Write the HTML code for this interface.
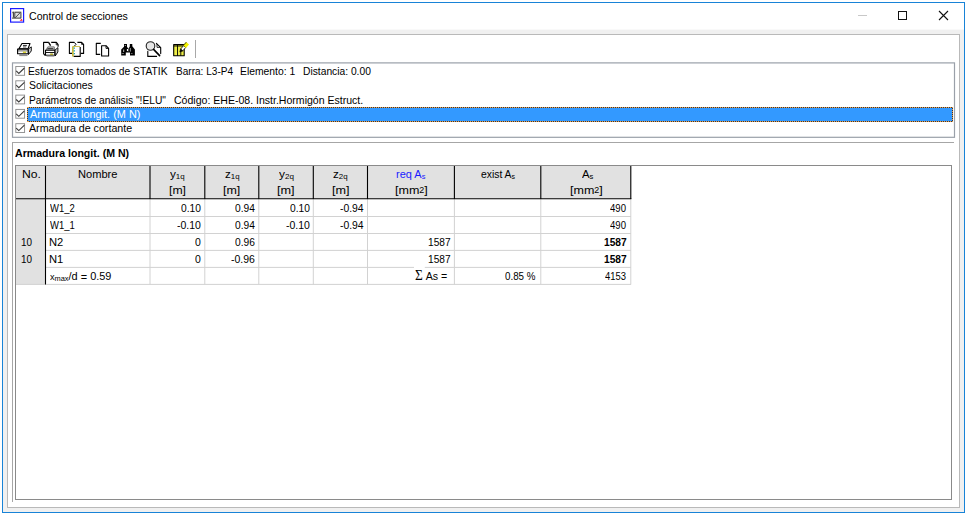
<!DOCTYPE html>
<html lang="es">
<head>
<meta charset="utf-8">
<title>Control de secciones</title>
<style>
html,body{margin:0;padding:0;background:#fff;}
body{width:966px;height:514px;position:relative;overflow:hidden;font-family:"Liberation Sans",sans-serif;font-size:11.5px;color:#000;}
.abs{position:absolute;}
#win{left:2px;top:2px;width:961px;height:509px;border:1px solid #1883d7;background:#f0f0f0;}
#titlebar{left:3px;top:3px;width:961px;height:26px;background:#fff;border-bottom:1px solid #f9f9f9;}
#outer{left:7px;top:34px;width:951px;height:472px;border:1px solid #b9b9b9;background:#fff;}
#sel{left:27px;top:107px;width:924px;height:13px;background:#3399ff;border:1px solid #27364f;}
#sel2{left:27px;top:107px;width:924px;height:13px;border:1px dotted #f0a040;}
#p2top{left:12px;top:142px;width:942px;height:1px;background:#a6a6a6;}
#p2left{left:12px;top:142px;width:1px;height:360px;background:#a6a6a6;}
#tpanel{left:15px;top:165px;width:935px;height:333px;border:1px solid #8a8a8a;background:#fff;}
#grid{left:0;top:0;}
#icons{left:0;top:0;}
.tx{position:absolute;transform-origin:0 0;white-space:nowrap;line-height:14px;height:14px;}
.sub{font-size:7.8px;position:relative;top:1.6px;}
.sm{font-size:9.6px;}
.dn{position:relative;top:1px;}
.sup{font-size:8.2px;position:relative;top:-1px;}
.sig{font-family:"Liberation Serif","DejaVu Serif",serif;font-size:14.5px;line-height:10px;}
</style>
</head>
<body>
<div id="win" class="abs"></div>
<div id="titlebar" class="abs"></div>
<div id="outer" class="abs"></div>
<svg class="abs" style="left:0;top:0" width="966" height="140" viewBox="0 0 966 140"><rect x="12.5" y="62.9" width="942" height="74.4" fill="#fff" stroke="#9aa0a9" stroke-width="1.2"/></svg>
<div id="sel" class="abs"></div>
<div id="sel2" class="abs"></div>
<div id="p2top" class="abs"></div>
<div id="p2left" class="abs"></div>
<div id="tpanel" class="abs"></div>
<svg id="grid" class="abs" width="966" height="514" viewBox="0 0 966 514">
<rect x="16" y="166" width="615" height="32.5" fill="#e1e1e1"/>
<rect x="16" y="198" width="29.5" height="86.5" fill="#e1e1e1"/>
<g stroke="#d2d2d2" stroke-width="1">
<path d="M150 199V284.5M204.8 199V284.5M258.8 199V284.5M313.3 199V284.5M367.5 199V284.5M454.4 199V284.5M540.8 199V284.5M630.8 199V284.5"/>
<path d="M46 216.5H631M46 233.5H631M46 250.4H631M46 267.4H631M16 284.4H631"/>
</g>
<rect x="414" y="266" width="10.8" height="3" fill="#fff"/>
<g stroke="#000" stroke-width="1.1">
<path d="M45.5 166V284.5M150 166V199M204.8 166V199M258.8 166V199M313.3 166V199M367.5 166V199M454.4 166V199M540.8 166V199M630.8 166V199"/>
<path d="M16 198.7H631.3"/>
</g>
</svg>
<svg id="icons" class="abs" width="966" height="140" viewBox="0 0 966 140">
<!-- window icon -->
<rect x="10.6" y="8.6" width="13" height="13.5" fill="#fff" stroke="#1c1cff" stroke-width="1.2"/>
<rect x="11.9" y="11" width="9.8" height="8" fill="#dedede"/>
<g fill="none" stroke="#222" stroke-width="0.8">
<path d="M14.8 12.3H20.9V18.1H12.1M14.8 12.3V18M15.4 17.6L19.8 13"/>
<path d="M12.3 12.8L13.5 12.1V17.6"/>
</g>
<path d="M19.6 20.8L22.8 20.8L21.6 18.7Z" fill="#ff1818"/>
<!-- min / max / close -->
<path d="M858 15.5H867" stroke="#c8c8c8" stroke-width="1"/>
<rect x="898.5" y="11.5" width="8" height="8" fill="none" stroke="#111" stroke-width="1"/>
<path d="M939 11L948 20M948 11L939 20" stroke="#111" stroke-width="1.1" fill="none"/>
<!-- toolbar separator -->
<path d="M195.5 40V58" stroke="#a8a8a8" stroke-width="1"/>
<!-- icon 1: printer -->
<g id="prn" stroke="#000" stroke-width="1.1" fill="#fff" stroke-linejoin="round">
<path d="M22 43.5H30L28 48.8H18.9Z"/>
<path d="M23 45.5H26.3V47.8H23Z" fill="#9a9a9a" stroke="none"/>
<path d="M23 45.4H26.9" stroke-width="0.8"/>
<path d="M28.2 49.1L31.3 46.9V50.9L28.5 54.5Z" fill="#cfcfcf" stroke-width="0.9"/>
<path d="M17.6 49.1H28.2V53.8H17.6Z"/>
<path d="M17.6 50.9H28.2" stroke-width="0.6"/>
<rect x="22.9" y="51.6" width="3.2" height="1.3" fill="#d2ca18" stroke="none"/>
<path d="M19.2 54.8H27.6" stroke="#808080" stroke-width="1.2"/>
<path d="M19.4 55.6H27.4" stroke="#444" stroke-width="0.5"/>
</g>
<!-- icon 2: page + printer -->
<g stroke="#000" stroke-width="1.1" fill="none" stroke-linejoin="round">
<path d="M48.8 42.4H43.6V53.6L45 55.4"/>
<path d="M51.2 42.4H56.4L58.1 44.6V46.8"/>
<path d="M48.6 42.4L50.6 45.6" stroke-width="1.3"/>
<path d="M56.2 42.6V44.8H58" stroke-width="0.8"/>
<path d="M47.8 46.8H54.2L55 49.9H46Z" fill="#cdcdcd" stroke="#555" stroke-width="0.7"/>
<path d="M47.4 48.4H53.4" stroke="#222" stroke-width="0.9"/>
<path d="M54.8 50.3L57.9 47.6V52L55.2 56Z" fill="#c8c8c8" stroke-width="0.9"/>
<path d="M45.5 50.3H54.8V55.3H45.5Z" fill="#fff"/>
<path d="M45.5 52.5H54.8" stroke-width="0.9"/>
<rect x="50.2" y="53.5" width="2.7" height="1.4" fill="#a8a010" stroke="none"/>
<path d="M46.6 56H54.4" stroke="#8a8a8a" stroke-width="1.2"/>
</g>
<!-- icon 3: pages + notebook -->
<g stroke="#000" stroke-width="1.1" fill="none" stroke-linejoin="round">
<path d="M74.4 42.4H69.4V53.4H72.4"/>
<path d="M74.4 42.4L76 44.4L74 46.4" stroke-width="1"/>
<path d="M77.4 42.4H81.6L83.6 44.4V53.4H80.6"/>
<path d="M81.6 42.4V44.4H83.6" stroke-width="0.8"/>
<rect x="72.4" y="46.4" width="7.8" height="10" fill="#fff" stroke="none"/>
<path d="M72.6 46.5H80" stroke="#c4b42c" stroke-width="0.8"/>
<path d="M80.2 47V56.4H73.6"/>
<path d="M72.9 46.4V56.6" stroke="#c4b42c" stroke-width="1.6"/>
<path d="M74.3 47.6V55.6" stroke="#0c9cb4" stroke-width="1.2" stroke-dasharray="1.2 1.5"/>
</g>
<!-- icon 4: copy -->
<g stroke="#000" stroke-width="1.1" fill="none" stroke-linejoin="round">
<path d="M100.8 43.4H96.3V54.4H100.2"/>
<path d="M101.6 45.7H106L108.6 48.4V56H101.6Z" fill="#fff"/>
<path d="M106 45.7V48.4H108.6" stroke-width="0.9"/>
</g>
<!-- icon 5: binoculars -->
<g fill="#000" stroke="none">
<path d="M124 43.9H127V46.7L128.6 49.2V52.6H125.8V55.4H121.2V49.4L124 46.7Z"/>
<path d="M129.8 44H132.3V46.2L134.9 49.4V55.4H130V52.6H128.4V48.8L129.8 46.6Z"/>
<rect x="126.9" y="49" width="1.3" height="2.1" fill="#fff"/>
<rect x="123.1" y="49.5" width="1.1" height="2.5" fill="#a8a8a8"/>
<rect x="129.8" y="48" width="1.1" height="3.6" fill="#909090"/>
<rect x="124.8" y="45" width="0.9" height="0.9" fill="#e8e8e8"/>
<rect x="121.7" y="53.2" width="2.3" height="0.7" fill="#999"/>
<rect x="130.9" y="53.2" width="1.6" height="0.7" fill="#999"/>
</g>
<!-- icon 6: magnifier + page -->
<g stroke="#000" stroke-width="1.1" fill="none" stroke-linejoin="round" stroke-linecap="round">
<path d="M147.8 51.4V56.4H156.6"/>
<path d="M156.4 43.4L160.7 47.6V53.6"/>
<path d="M157 44.4V47.4H160.2" stroke-width="0.8"/>
<circle cx="150.5" cy="46" r="4.3" fill="#e6e6e6" stroke="#222" stroke-width="1.1"/>
<path d="M153.6 49.4L159.6 55.6" stroke-width="1.6"/>
</g>
<!-- icon 7: table + pencil -->
<g stroke-linejoin="round">
<rect x="173.7" y="44.6" width="10.5" height="11.2" fill="#eeee48" stroke="#000" stroke-width="1.1"/>
<path d="M177.5 44.6V55.8M180.8 50.5V55.8M173.7 46H184.2" stroke="#000" stroke-width="0.9" fill="none"/>
<path d="M185.7 47.5L183.5 45.7L180.6 49.1L182.7 50.9Z" fill="#fff" stroke="#000" stroke-width="0.8"/>
<path d="M189 44.5L186.2 42L183.2 45.3L186 47.9Z" fill="#f2f200" stroke="none"/>
<path d="M186.3 42.1L183.4 45.4" stroke="#000" stroke-width="0.7"/>
<path d="M180.6 49.1L182.7 50.9L179.8 52Z" fill="#000" stroke="#000" stroke-width="0.6"/>
</g>
<!-- checkboxes -->
<g fill="#fff" stroke="#8a8a8a" stroke-width="0.9">
<rect x="15.8" y="66.5" width="8.8" height="8.8"/>
<rect x="15.8" y="80.8" width="8.8" height="8.8"/>
<rect x="15.8" y="95.1" width="8.8" height="8.8"/>
<rect x="15.8" y="109.4" width="8.8" height="8.8"/>
<rect x="15.8" y="123.7" width="8.8" height="8.8"/>
</g>
<g fill="none" stroke="#3c3c3c" stroke-width="1.1">
<path d="M16.2 70.9L18.8 73.4L24.4 68"/>
<path d="M16.2 85.2L18.8 87.7L24.4 82.3"/>
<path d="M16.2 99.5L18.8 102L24.4 96.6"/>
<path d="M16.2 113.8L18.8 116.3L24.4 110.9"/>
<path d="M16.2 128.1L18.8 130.6L24.4 125.2"/>
</g>
</svg>

<div class="tx" id="t0" style="left:28.54px;top:9.00px;transform:scaleX(0.9202);">Control de secciones</div>
<div class="tx" id="t1" style="left:28.41px;top:64.00px;transform:scaleX(0.8935);">Esfuerzos tomados de STATIK</div>
<div class="tx" id="t2" style="left:175.53px;top:64.00px;transform:scaleX(0.8750);">Barra: L3-P4</div>
<div class="tx" id="t3" style="left:240.00px;top:64.00px;transform:scaleX(0.9000);">Elemento: 1</div>
<div class="tx" id="t4" style="left:303.11px;top:64.00px;transform:scaleX(0.8923);">Distancia: 0.00</div>
<div class="tx" id="t5" style="left:28.85px;top:78.30px;transform:scaleX(0.9079);">Solicitaciones</div>
<div class="tx" id="t6" style="left:29.11px;top:92.60px;transform:scaleX(0.8898);">Parámetros de análisis "!ELU"</div>
<div class="tx" id="t7" style="left:174.34px;top:92.60px;transform:scaleX(0.9166);">Código: EHE-08. Instr.Hormigón Estruct.</div>
<div class="tx" id="t8" style="left:29.50px;top:106.90px;transform:scaleX(0.9495);color:#fff;">Armadura longit. (M N)</div>
<div class="tx" id="t9" style="left:29.30px;top:121.20px;transform:scaleX(0.9273);">Armadura de cortante</div>
<div class="tx" id="t10" style="left:15.37px;top:145.60px;transform:scaleX(0.9209);font-weight:bold;">Armadura longit. (M N)</div>
<div class="tx" id="t11" style="left:21.84px;top:166.60px;transform:scaleX(1.0562);">No.</div>
<div class="tx" id="t12" style="left:77.74px;top:166.60px;transform:scaleX(0.9646);">Nombre</div>
<div class="tx" id="t13" style="left:169.70px;top:166.60px;transform:scaleX(1.0214);">y<span class="sub">1q</span></div>
<div class="tx" id="t14" style="left:168.90px;top:182.50px;transform:scaleX(1.0621);">[m]</div>
<div class="tx" id="t15" style="left:224.50px;top:166.60px;transform:scaleX(1.0074);">z<span class="sub">1q</span></div>
<div class="tx" id="t16" style="left:223.09px;top:182.50px;transform:scaleX(1.0828);">[m]</div>
<div class="tx" id="t17" style="left:278.80px;top:166.60px;transform:scaleX(1.0357);">y<span class="sub">2q</span></div>
<div class="tx" id="t18" style="left:277.37px;top:182.50px;transform:scaleX(1.1034);">[m]</div>
<div class="tx" id="t19" style="left:333.49px;top:166.60px;transform:scaleX(1.0148);">z<span class="sub">2q</span></div>
<div class="tx" id="t20" style="left:331.88px;top:182.50px;transform:scaleX(1.0966);">[m]</div>
<div class="tx" id="t21" style="left:396.08px;top:166.60px;transform:scaleX(0.9546);color:#1a1aff;">req A<span class="sub">s</span></div>
<div class="tx" id="t22" style="left:394.88px;top:182.50px;transform:scaleX(1.0877);">[mm<span class="sup">2</span>]</div>
<div class="tx" id="t23" style="left:480.75px;top:166.60px;transform:scaleX(0.9000);">exist A<span class="sub">s</span></div>
<div class="tx" id="t24" style="left:581.70px;top:166.60px;transform:scaleX(0.9867);">A<span class="sub">s</span></div>
<div class="tx" id="t25" style="left:569.88px;top:182.50px;transform:scaleX(1.0877);">[mm<span class="sup">2</span>]</div>
<div class="tx" id="t26" style="left:49.80px;top:200.80px;transform:scaleX(0.8237);">W1_2</div>
<div class="tx" id="t27" style="left:49.80px;top:217.70px;transform:scaleX(0.8237);">W1_1</div>
<div class="tx" id="t28" style="left:48.83px;top:234.70px;transform:scaleX(0.9736);">N2</div>
<div class="tx" id="t29" style="left:48.83px;top:251.60px;transform:scaleX(0.9736);">N1</div>
<div class="tx" id="t30" style="left:49.56px;top:268.60px;transform:scaleX(0.9500);"><span class="sm">x</span><span class="sub">max</span>/d <span class="dn">=</span> 0.59</div>
<div class="tx" id="t31" style="left:20.55px;top:234.70px;transform:scaleX(0.8609);">10</div>
<div class="tx" id="t32" style="left:20.55px;top:251.60px;transform:scaleX(0.8609);">10</div>
<div class="tx" id="t33" style="left:180.56px;top:200.80px;transform:scaleX(0.8884);">0.10</div>
<div class="tx" id="t34" style="left:176.64px;top:217.70px;transform:scaleX(0.9109);">-0.10</div>
<div class="tx" id="t35" style="left:194.65px;top:234.70px;transform:scaleX(0.9091);">0</div>
<div class="tx" id="t36" style="left:194.65px;top:251.60px;transform:scaleX(0.9091);">0</div>
<div class="tx" id="t37" style="left:235.26px;top:200.80px;transform:scaleX(0.8884);">0.94</div>
<div class="tx" id="t38" style="left:235.26px;top:217.70px;transform:scaleX(0.8884);">0.94</div>
<div class="tx" id="t39" style="left:235.26px;top:234.70px;transform:scaleX(0.8884);">0.96</div>
<div class="tx" id="t40" style="left:231.34px;top:251.60px;transform:scaleX(0.9109);">-0.96</div>
<div class="tx" id="t41" style="left:289.86px;top:200.80px;transform:scaleX(0.8884);">0.10</div>
<div class="tx" id="t42" style="left:285.94px;top:217.70px;transform:scaleX(0.9109);">-0.10</div>
<div class="tx" id="t43" style="left:340.15px;top:200.80px;transform:scaleX(0.9020);">-0.94</div>
<div class="tx" id="t44" style="left:340.15px;top:217.70px;transform:scaleX(0.9020);">-0.94</div>
<div class="tx" id="t45" style="left:428.34px;top:234.70px;transform:scaleX(0.8825);">1587</div>
<div class="tx" id="t46" style="left:428.34px;top:251.60px;transform:scaleX(0.8825);">1587</div>
<div class="tx" id="t47" style="left:415.34px;top:268.60px;transform:scaleX(0.9235);"><span class="sig">Σ</span> As =</div>
<div class="tx" id="t48" style="left:504.57px;top:268.60px;transform:scaleX(0.8514);">0.85 %</div>
<div class="tx" id="t49" style="left:610.49px;top:200.80px;transform:scaleX(0.8324);">490</div>
<div class="tx" id="t50" style="left:610.49px;top:217.70px;transform:scaleX(0.8324);">490</div>
<div class="tx" id="t51" style="left:603.64px;top:234.70px;transform:scaleX(0.8857);font-weight:bold;">1587</div>
<div class="tx" id="t52" style="left:603.64px;top:251.60px;transform:scaleX(0.8857);font-weight:bold;">1587</div>
<div class="tx" id="t53" style="left:605.29px;top:268.60px;transform:scaleX(0.8200);">4153</div>
</body>
</html>
